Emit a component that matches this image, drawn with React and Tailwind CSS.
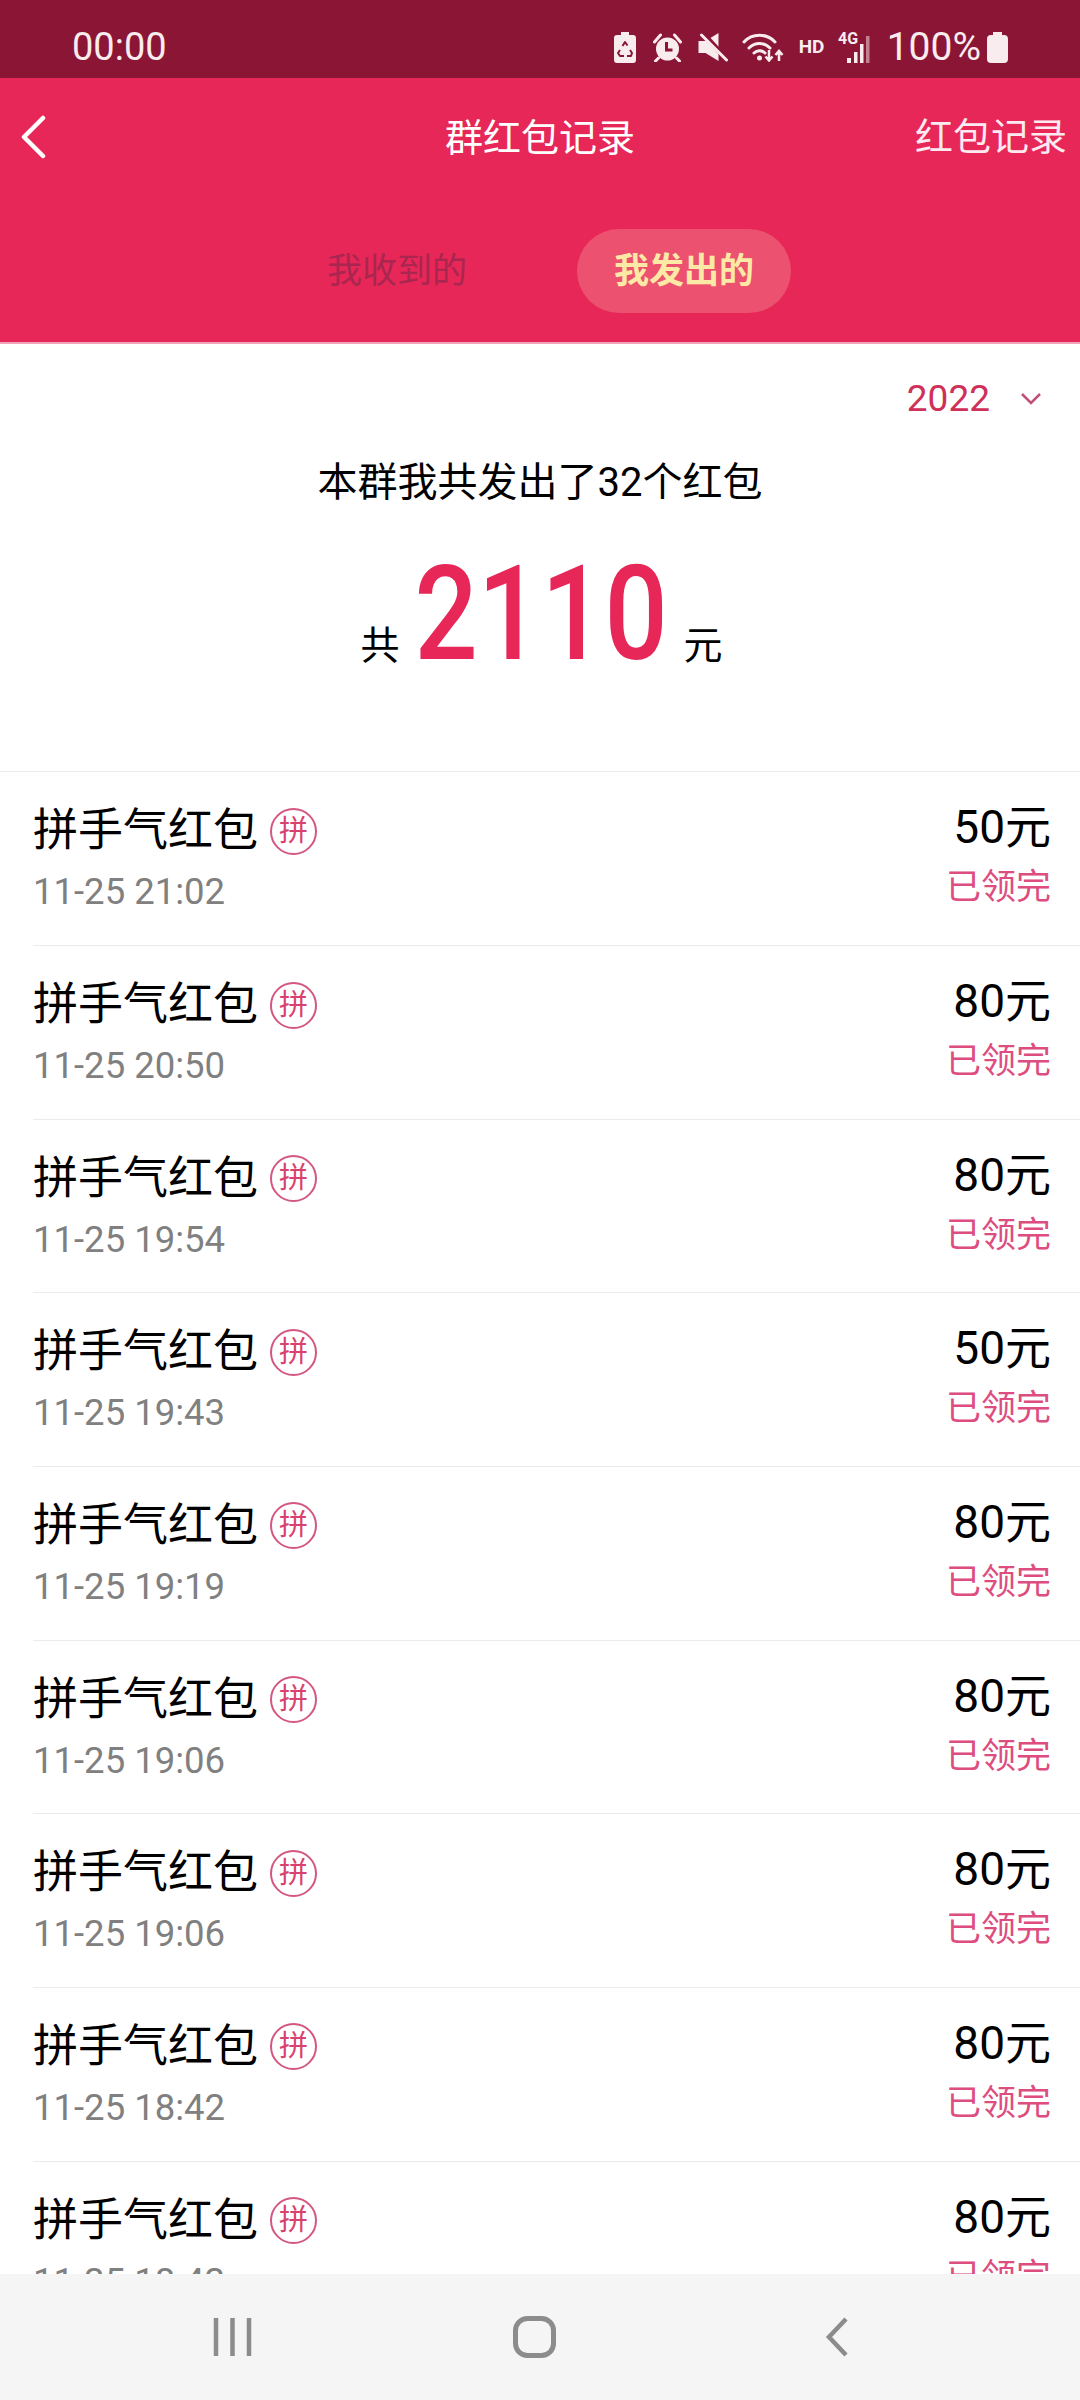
const F = '[font-family:Roboto,"Noto_Sans_CJK_SC",sans-serif]';

const rows = [
  ["11-25 21:02", "50元"],
  ["11-25 20:50", "80元"],
  ["11-25 19:54", "80元"],
  ["11-25 19:43", "50元"],
  ["11-25 19:19", "80元"],
  ["11-25 19:06", "80元"],
  ["11-25 19:06", "80元"],
  ["11-25 18:42", "80元"],
  ["11-25 18:42", "80元"],
];

function StatusIcons() {
  return (
    <div className="flex items-center text-[#f8ecef]">
      <svg width="22" height="31" viewBox="0 0 22 31">
        <path d="M7 0h8v3h4a3 3 0 0 1 3 3v22a3 3 0 0 1-3 3H3a3 3 0 0 1-3-3V6a3 3 0 0 1 3-3h4z" fill="currentColor" />
        <path d="M8.500 14l2.500-4 2.500 3.500M6 18l-2 3 2 3h4M13 24h4l1-3-2-3" fill="none" stroke="#8b1535" strokeWidth="2" strokeLinejoin="round" />
      </svg>
      <svg width="29" height="29" viewBox="0 0 28 29" className="ml-[17px]">
        <path d="M1 9l6-7M27 9l-6-7M5 25l-3 3M23 25l3 3" stroke="currentColor" strokeWidth="3" strokeLinecap="round" />
        <circle cx="14" cy="16" r="11.500" fill="currentColor" />
        <path d="M13 9v8h6" fill="none" stroke="#8b1535" strokeWidth="3" />
      </svg>
      <svg width="30" height="29" viewBox="0 0 29 29" className="ml-[16px]">
        <path d="M0 8h7L20 0v28L7 20H0z" fill="currentColor" />
        <path d="M4 0l25 27" stroke="#8b1535" strokeWidth="5" />
        <path d="M3 2l25 25" stroke="currentColor" strokeWidth="3" strokeLinecap="round" />
      </svg>
      <svg width="42" height="30" viewBox="0 0 42 30" className="ml-[14px]">
        <path d="M2 10C10 1 25 1 33 10M7 16c6-6 15-6 21 0M12 21c3-3 8-3 11 0" fill="none" stroke="currentColor" strokeWidth="3" strokeLinecap="round" />
        <circle cx="17.500" cy="26" r="2.500" fill="currentColor" />
        <path d="M27 18v10M23.500 24.500l3.500 4 3.500-4M37 29V19M33.500 23l3.500-4 3.500 4" fill="none" stroke="currentColor" strokeWidth="2.500" />
      </svg>
      <span className="ml-[15px] w-[27px] text-[19px] leading-[20px] font-bold font-['Roboto']">HD</span>
      <svg width="36" height="31" viewBox="0 0 36 31" className="ml-[12px]">
        <text x="0" y="12" fontSize="16" fontWeight="700" fontFamily="Roboto" fill="currentColor">4G</text>
        <rect x="9" y="26" width="4" height="5" fill="currentColor" />
        <rect x="16" y="20" width="3.500" height="11" fill="currentColor" />
        <rect x="22" y="12" width="3.500" height="19" fill="currentColor" />
        <rect x="28" y="4" width="3.500" height="27" fill="#c4808f" />
      </svg>
      <span className="ml-[13px] text-[39px] leading-[44px] font-['Roboto']">100%</span>
      <svg width="21" height="31" viewBox="0 0 21 31" className="ml-[6px]">
        <path d="M6 0h9v3h2a4 4 0 0 1 4 4v20a4 4 0 0 1-4 4H4a4 4 0 0 1-4-4V7a4 4 0 0 1 4-4h2z" fill="currentColor" />
      </svg>
    </div>
  );
}

function Row({ time, amount, first }) {
  return (
    <div className={first ? "h-[174px] border-t border-[#ebebeb]" : "ml-[33px] h-[173.67px] border-t border-[#ebebeb]"}>
      <div className={first ? "flex justify-between pl-[33px] pr-[29px] pt-[35px]" : "flex justify-between pr-[29px] pt-[35px]"}>
        <div>
          <div className="flex h-[48px] items-center">
            <span className="text-[45px] leading-[48px] text-black">拼手气红包</span>
            <span className="ml-[12px] flex h-[47px] w-[47px] items-center justify-center rounded-full border-2 border-[#d4577f] text-[29px] leading-none text-[#d9416f]">拼</span>
          </div>
          <div className="mt-[16px] text-[36.500px] leading-[42px] text-[#808080]">{time}</div>
        </div>
        <div className="-mt-[4px] flex flex-col items-end">
          <div className="text-[46px] leading-[48px] text-black">{amount}</div>
          <div className="mt-[16px] text-[35px] leading-[42px] text-[#dd4d80]">已领完</div>
        </div>
      </div>
    </div>
  );
}

export default function App() {
  return (
    <div className={`flex h-[2400px] w-[1080px] flex-col overflow-hidden bg-white ${F}`}>
      <div className="flex h-[78px] shrink-0 items-center justify-between bg-[#8b1535] pl-[72px] pr-[72px] pt-[16px]">
        <span className="text-[38px] leading-[44px] text-[#f8ecef]">00:00</span>
        <StatusIcons />
      </div>
      <div className="h-[266px] shrink-0 border-b-2 border-[#f0a5ba] bg-[#e72757]">
        <div className="grid h-[120px] grid-cols-3 items-center">
          <svg width="26" height="44" viewBox="0 0 26 44" className="ml-[20px] -mt-[2px]">
            <path d="M23 3L4 22l19 19" fill="none" stroke="white" strokeWidth="4.500" strokeLinecap="round" strokeLinejoin="round" />
          </svg>
          <div className="text-center text-[38px] leading-[48px] text-white">群红包记录</div>
          <div className="pr-[13px] text-right text-[38px] leading-[48px] text-[#fdeaf0] -mt-[2px]">红包记录</div>
        </div>
        <div className="flex items-center pl-[290px] pt-[31px]">
          <div className="flex h-[84px] w-[214px] items-center justify-center pt-[2px] text-[35px] text-[#a82650]">我收到的</div>
          <div className="ml-[73px] flex h-[84px] w-[214px] items-center justify-center rounded-full bg-[#ec5170] pt-[2px] text-[35px] font-bold text-[#fde9a6]">我发出的</div>
        </div>
      </div>
      <div className="h-[427px] shrink-0">
        <div className="flex h-[69px] items-center justify-end pr-[38px] pt-[40px]">
          <span className="text-[37px] leading-[44px] text-[#cf3059]">2022</span>
          <svg width="22" height="14" viewBox="0 0 22 14" className="ml-[30px]">
            <path d="M2 2l9 9 9-9" fill="none" stroke="#c0507a" strokeWidth="2.500" />
          </svg>
        </div>
        <div className="mt-[46px] text-center text-[40px] leading-[48px] text-black">本群我共发出了32个红包</div>
        <div className="mt-[32px] flex items-baseline justify-center pl-[3px]">
          <span className="text-[39px] text-black">共</span>
          <span className="mx-[20px] inline-block w-[244px] scale-x-[0.85] text-center text-[131px] leading-[150px] font-medium text-[#e72757]"><span className="-ml-[29px] inline-block w-[300px]">2110</span></span>
          <span className="text-[39px] text-black">元</span>
        </div>
      </div>
      <div className="min-h-0 flex-1 overflow-hidden">
        {rows.map((r, i) => (
          <Row key={i} time={r[0]} amount={r[1]} first={i === 0} />
        ))}
      </div>
      <div className="flex h-[126px] shrink-0 items-center bg-[#f5f5f5] pl-[213px]">
        <svg width="39" height="40" viewBox="0 0 39 40">
          <path d="M3 1v38M19.500 1v38M36 1v38" stroke="#8c8c8c" strokeWidth="4.500" />
        </svg>
        <svg width="43" height="42" viewBox="0 0 43 42" className="ml-[261px]">
          <rect x="2.500" y="2.500" width="38" height="37" rx="12" fill="none" stroke="#8c8c8c" strokeWidth="5" />
        </svg>
        <svg width="24" height="40" viewBox="0 0 24 40" className="ml-[269px]">
          <path d="M21 2L4 20l17 18" fill="none" stroke="#8c8c8c" strokeWidth="4.500" />
        </svg>
      </div>
    </div>
  );
}
